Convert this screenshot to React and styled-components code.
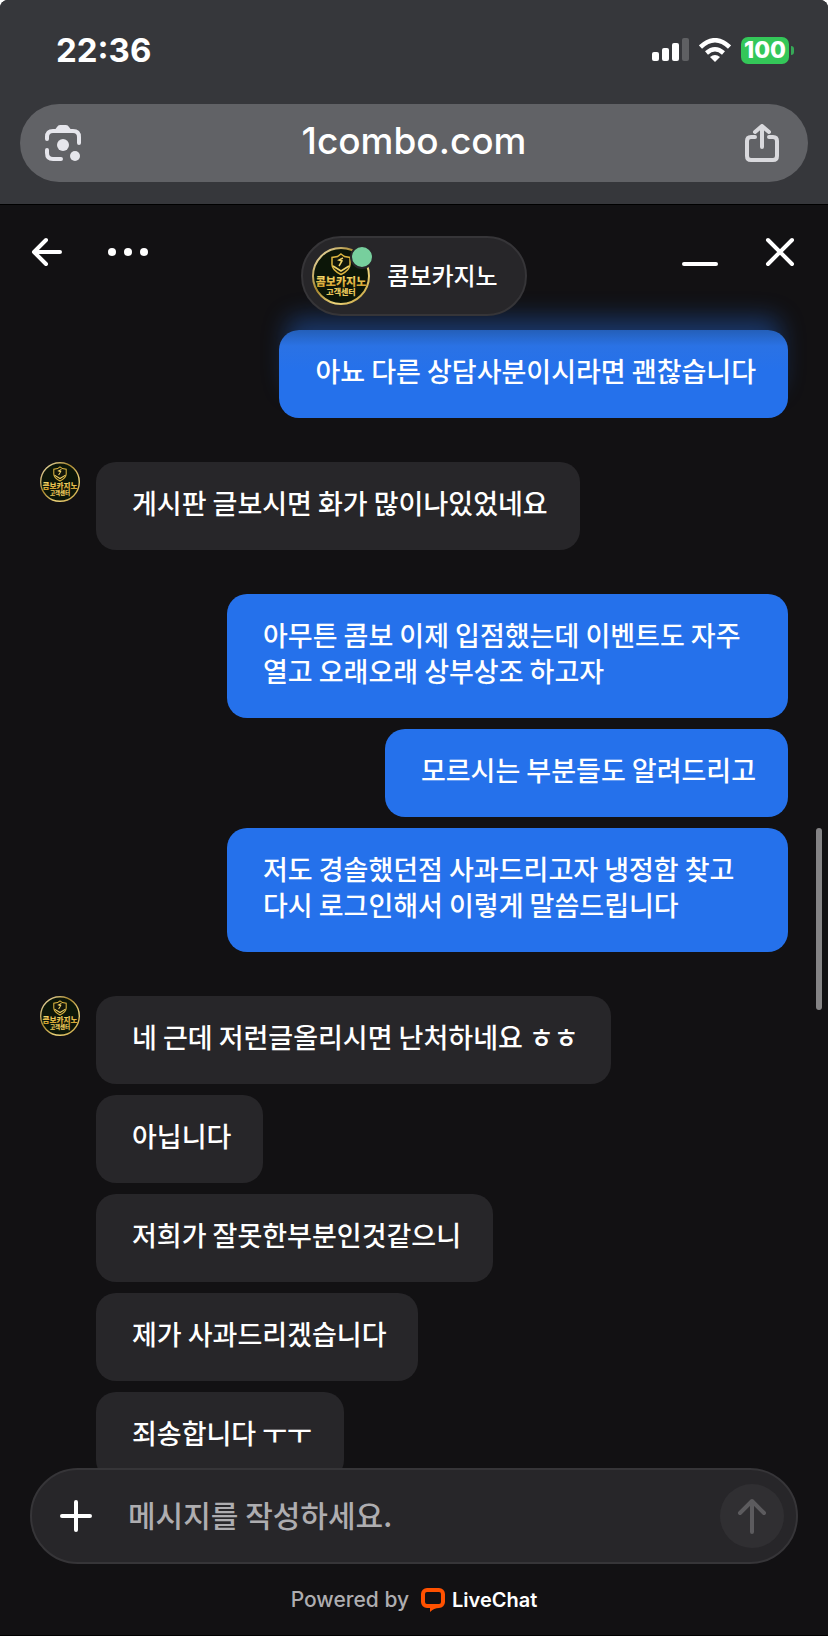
import styled, { createGlobalStyle, css } from 'styled-components';

const GlobalStyle = createGlobalStyle`
  * {
    box-sizing: border-box;
  }

  body {
    margin: 0;
    background: #ffffff;
    font-family: 'Noto Sans CJK KR', sans-serif;
    color: #ffffff;
  }
`;

const Screen = styled.div`
  display: flex;
  flex-direction: column;
  min-height: 100vh;
  background: #121113;
  border-radius: 8px 8px 0 0;
  border-bottom: 1px solid #000000;
  overflow: hidden;
`;

const BrowserBar = styled.div`
  background: #36373b;
  border-bottom: 1px solid #000000;
  padding: 30px 20px 22px;
`;

const StatusBar = styled.div`
  display: flex;
  align-items: center;
  justify-content: space-between;
  height: 40px;
  padding: 0 14px 0 36px;
  margin-bottom: 34px;
`;

const Clock = styled.time`
  font: 700 33px/40px Inter, sans-serif;
`;

const StatusIcons = styled.div`
  display: flex;
  align-items: center;
  gap: 10px;
`;

const Battery = styled.div`
  display: flex;
  align-items: center;
  gap: 2px;

  &::after {
    content: '';
    width: 3px;
    height: 9px;
    border-radius: 0 4px 4px 0;
    background: #36a857;
  }
`;

const BatteryLevel = styled.span`
  width: 48px;
  height: 27px;
  border-radius: 7px;
  background: #34c759;
  font: 800 23px/27px Inter, sans-serif;
  text-align: center;
`;

const AddressBar = styled.div`
  display: grid;
  grid-template-columns: 1fr auto 1fr;
  align-items: center;
  height: 78px;
  padding: 0 28px 0 24px;
  border-radius: 39px;
  background: #616266;
`;

const Address = styled.span`
  padding: 0 0 4px 4px;
  font: 500 37px/48px Inter, sans-serif;
`;

const IconButton = styled.button`
  display: flex;
  justify-self: ${props => props.$side || 'start'};
  padding: 0;
  border: 0;
  background: none;
  color: ${props => props.$color || '#ffffff'};
`;

const Chat = styled.main`
  position: relative;
  flex: 1;
  display: flex;
  flex-direction: column;
`;

const ChatHeader = styled.header`
  display: grid;
  grid-template-columns: 1fr auto 1fr;
  padding: 31px 30px 14px;
`;

const HeaderActions = styled.div`
  display: flex;
  align-items: flex-start;
  justify-content: ${props => props.$end ? 'flex-end' : 'flex-start'};
  gap: 44px;
`;

const AgentPill = styled.div`
  position: relative;
  z-index: 1;
  display: flex;
  align-items: center;
  gap: 17px;
  height: 80px;
  padding: 0 27px 0 9px;
  border: 2px solid #363538;
  border-radius: 40px;
  background: #272629;
`;

const AgentPhoto = styled.div`
  position: relative;
  display: flex;

  &::after {
    content: '';
    position: absolute;
    top: -2px;
    right: -4px;
    width: 20px;
    height: 20px;
    border: 2px solid #272629;
    border-radius: 50%;
    background: #77cf9d;
  }
`;

const AgentName = styled.h1`
  margin: 0;
  padding-bottom: 2px;
  font-size: 24px;
  line-height: 36px;
  font-weight: 500;
`;

const Messages = styled.div`
  flex: 1;
  display: flex;
  flex-direction: column;
  gap: 44px;
  padding: 0 40px;
`;

const MessageGroup = styled.section`
  display: flex;
  align-items: flex-start;
  justify-content: ${props => props.$own ? 'flex-end' : 'flex-start'};
  gap: 16px;
`;

const BubbleStack = styled.div`
  flex: 1;
  display: flex;
  flex-direction: column;
  align-items: ${props => props.$own ? 'flex-end' : 'flex-start'};
  gap: 11px;
`;

const Bubble = styled.p`
  max-width: 75%;
  margin: 0;
  padding: 23px 32px 29px 36px;
  border-radius: 20px;
  background: ${props => props.$own ? '#2571eb' : '#272629'};
  font-size: 27px;
  line-height: 36px;
  font-weight: 500;
  word-break: keep-all;

  ${props => props.$underHeader && css`
    background: linear-gradient(#245fb9, #2a72e5 16px, #2571eb 40px);
    box-shadow: 0 -20px 24px -8px rgba(37, 113, 235, 0.4);
  `}
`;

const Scrollbar = styled.div`
  position: absolute;
  top: 623px;
  right: 6px;
  width: 6px;
  height: 182px;
  border-radius: 3px;
  background: #848385;
`;

const Composer = styled.form`
  position: relative;
  display: flex;
  align-items: center;
  height: 96px;
  margin: -12px 30px 0;
  padding: 0 12px 0 28px;
  border: 2px solid #363538;
  border-radius: 48px;
  background: #272629;
`;

const MessageInput = styled.input`
  flex: 1;
  min-width: 0;
  height: 60px;
  margin: 0 16px 0 36px;
  padding: 0 0 4px;
  border: 0;
  outline: 0;
  background: none;
  color: #ffffff;
  font: 500 30px/44px 'Noto Sans CJK KR', sans-serif;

  &::placeholder {
    color: #aeadb0;
    opacity: 1;
  }
`;

const SendButton = styled.button`
  display: flex;
  align-items: center;
  justify-content: center;
  width: 64px;
  height: 64px;
  padding: 0;
  border: 0;
  border-radius: 50%;
  background: #302f32;
  color: #5c5b5e;
`;

const Footer = styled.footer`
  display: flex;
  align-items: center;
  justify-content: center;
  gap: 12px;
  height: 71px;
  color: #aeadb0;
  font: 500 21px/28px Inter, sans-serif;
`;

const BrandLink = styled.a`
  display: flex;
  align-items: center;
  gap: 7px;
  color: #ffffff;
  font: 600 20px/28px Inter, sans-serif;
  text-decoration: none;
`;

const conversation = [
  { own: true, messages: ['아뇨 다른 상담사분이시라면 괜찮습니다'] },
  { own: false, messages: ['게시판 글보시면 화가 많이나있었네요'] },
  {
    own: true,
    messages: [
      '아무튼 콤보 이제 입점했는데 이벤트도 자주 열고 오래오래 상부상조 하고자',
      '모르시는 부분들도 알려드리고',
      '저도 경솔했던점 사과드리고자 냉정함 찾고 다시 로그인해서 이렇게 말씀드립니다',
    ],
  },
  {
    own: false,
    messages: [
      '네 근데 저런글올리시면 난처하네요 ㅎㅎ',
      '아닙니다',
      '저희가 잘못한부분인것같으니',
      '제가 사과드리겠습니다',
      '죄송합니다 ㅜㅜ',
    ],
  },
];

const strokeProps = {
  fill: 'none',
  stroke: 'currentColor',
  strokeWidth: 4,
  strokeLinecap: 'round',
  strokeLinejoin: 'round',
};

const Avatar = ({ size }) => (
  <svg width={size} height={size} viewBox="0 0 58 58" role="img" aria-label="콤보카지노 고객센터">
    <defs>
      <linearGradient id="gold" x1="0" y1="0" x2="1" y2="1">
        <stop offset="0" stopColor="#f7ecc0" />
        <stop offset="0.4" stopColor="#a8862d" />
        <stop offset="0.7" stopColor="#efd77d" />
        <stop offset="1" stopColor="#b78f2c" />
      </linearGradient>
      <linearGradient id="letters" x1="0" y1="0" x2="0" y2="1">
        <stop offset="0" stopColor="#ffe97a" />
        <stop offset="1" stopColor="#c99320" />
      </linearGradient>
    </defs>
    <circle cx="29" cy="29" r="28" fill="#0c1608" stroke="url(#gold)" strokeWidth="2" />
    <path
      d="M29 7l3.500 2.500 5.500 1v7c0 4.500-4 7.500-9 10-5-2.500-9-5.500-9-10v-7l5.500-1z"
      fill="#12170a"
      stroke="#dcb53f"
      strokeWidth="1.500"
    />
    <path d="M31 11l-4 2 3 1-3 5M21 19l8 5 8-5" fill="none" stroke="#f0d468" strokeWidth="1.500" />
    <text
      x="29"
      y="39"
      textAnchor="middle"
      fontFamily="'Noto Sans CJK KR', sans-serif"
      fontWeight="900"
      fontSize="11"
      fill="url(#letters)"
    >
      콤보카지노
    </text>
    <text
      x="29"
      y="48"
      textAnchor="middle"
      fontFamily="'Noto Sans CJK KR', sans-serif"
      fontWeight="900"
      fontSize="8"
      fill="#e8c75a"
    >
      고객센터
    </text>
  </svg>
);

const SignalIcon = () => (
  <svg width="37" height="24" viewBox="0 0 37 24" fill="#ffffff">
    <rect x="0" y="14" width="7" height="9" rx="2" />
    <rect x="10" y="10" width="7" height="13" rx="2" />
    <rect x="20" y="5" width="7" height="18" rx="2" />
    <rect x="30" y="0" width="7" height="23" rx="2" fill="#5f6063" />
  </svg>
);

const WifiIcon = () => (
  <svg width="32" height="24" viewBox="0 0 32 24" fill="none" stroke="#ffffff" strokeWidth="4.500">
    <path d="M1.500 9Q16-4.500 30.500 9" />
    <path d="M7.500 15Q16 7.500 24.500 15" />
    <path d="M16 24l-5-5q5-4 10 0z" fill="#ffffff" stroke="none" />
  </svg>
);

const LensIcon = () => (
  <svg width="38" height="38" viewBox="0 0 38 38">
    <g {...strokeProps}>
      <path d="M3 15v-2q0-6 6-6h20q6 0 6 6v6M3 26v3q0 6 6 6h8" />
    </g>
    <path d="M10 7l3-4q1-2 3-2h6q2 0 3 2l3 4z" fill="currentColor" />
    <circle cx="19" cy="21" r="6" fill="currentColor" />
    <circle cx="31" cy="32" r="5" fill="currentColor" />
  </svg>
);

const ShareIcon = () => (
  <svg width="36" height="38" viewBox="0 0 36 38">
    <g {...strokeProps}>
      <path d="M11 13H7q-4 0-4 4v15q0 4 4 4h22q4 0 4-4V17q0-4-4-4h-4" />
      <path d="M18 23V3M11 8l7-6 7 6" />
    </g>
  </svg>
);

const App = () => (
  <>
    <GlobalStyle />
    <Screen>
      <BrowserBar>
        <StatusBar>
          <Clock>22:36</Clock>
          <StatusIcons>
            <SignalIcon />
            <WifiIcon />
            <Battery>
              <BatteryLevel>100</BatteryLevel>
            </Battery>
          </StatusIcons>
        </StatusBar>
        <AddressBar>
          <IconButton type="button" aria-label="Lens" $color="#e6e6ec">
            <LensIcon />
          </IconButton>
          <Address>1combo.com</Address>
          <IconButton type="button" aria-label="Share" $side="end" $color="#d9d9dd">
            <ShareIcon />
          </IconButton>
        </AddressBar>
      </BrowserBar>

      <Chat>
        <ChatHeader>
          <HeaderActions>
            <IconButton type="button" aria-label="Back">
              <svg width="34" height="32" viewBox="0 0 34 32" {...strokeProps}>
                <path d="M30 16H4M16 4L4 16l12 12" />
              </svg>
            </IconButton>
            <IconButton type="button" aria-label="More">
              <svg width="40" height="32" viewBox="0 0 40 32" fill="#ffffff">
                <circle cx="4" cy="16" r="4" />
                <circle cx="20" cy="16" r="4" />
                <circle cx="36" cy="16" r="4" />
              </svg>
            </IconButton>
          </HeaderActions>
          <AgentPill>
            <AgentPhoto>
              <Avatar size={58} />
            </AgentPhoto>
            <AgentName>콤보카지노</AgentName>
          </AgentPill>
          <HeaderActions $end>
            <IconButton type="button" aria-label="Minimize">
              <svg width="36" height="32" viewBox="0 0 36 32" {...strokeProps}>
                <path d="M2 28h32" />
              </svg>
            </IconButton>
            <IconButton type="button" aria-label="Close">
              <svg width="36" height="32" viewBox="0 0 36 32" {...strokeProps}>
                <path d="M6 4l24 24M30 4L6 28" />
              </svg>
            </IconButton>
          </HeaderActions>
        </ChatHeader>

        <Messages>
          {conversation.map((group, groupIndex) => (
            <MessageGroup key={groupIndex} $own={group.own}>
              {!group.own && <Avatar size={40} />}
              <BubbleStack $own={group.own}>
                {group.messages.map((message, index) => (
                  <Bubble
                    key={message}
                    $own={group.own}
                    $underHeader={groupIndex === 0 && index === 0}
                  >
                    {message}
                  </Bubble>
                ))}
              </BubbleStack>
            </MessageGroup>
          ))}
        </Messages>
        <Scrollbar />

        <Composer onSubmit={event => event.preventDefault()}>
          <IconButton type="button" aria-label="Attach">
            <svg width="32" height="32" viewBox="0 0 32 32" {...strokeProps}>
              <path d="M16 2v28M2 16h28" />
            </svg>
          </IconButton>
          <MessageInput aria-label="메시지" placeholder="메시지를 작성하세요." />
          <SendButton type="submit" aria-label="Send">
            <svg width="32" height="38" viewBox="0 0 32 38" {...strokeProps}>
              <path d="M16 35V4M4 16L16 4l12 12" />
            </svg>
          </SendButton>
        </Composer>

        <Footer>
          Powered by
          <BrandLink href="#livechat">
            <svg width="24" height="24" viewBox="0 0 24 24">
              <rect x="2" y="2" width="20" height="16" rx="4" fill="none" stroke="#ff5100" strokeWidth="4" />
              <path d="M9 16h8l1 4q-5 0-9 4z" fill="#ff5100" />
            </svg>
            LiveChat
          </BrandLink>
        </Footer>
      </Chat>
    </Screen>
  </>
);

export default App;
